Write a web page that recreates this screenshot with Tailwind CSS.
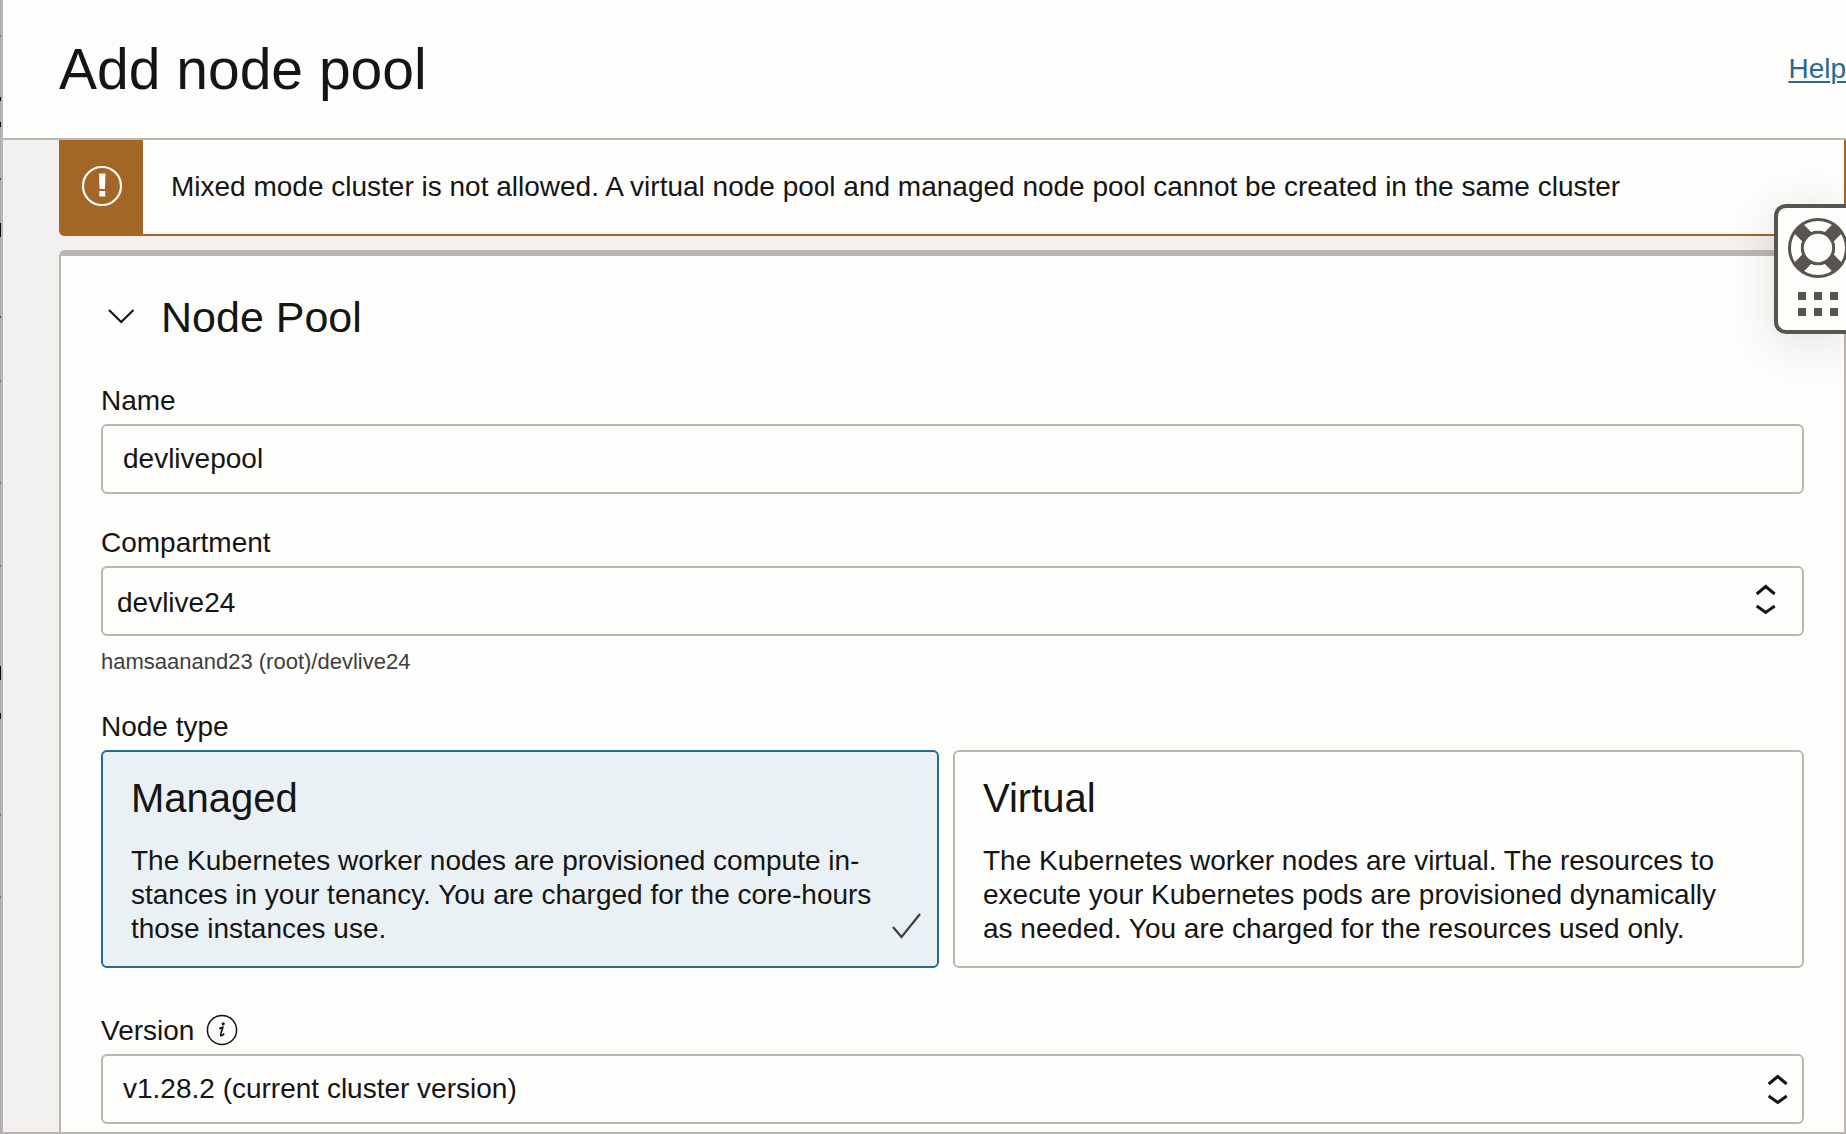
<!DOCTYPE html>
<html lang="en">
<head>
<meta charset="utf-8">
<title>Add node pool</title>
<script src="https://cdn.jsdelivr.net/npm/@tailwindcss/browser@4"></script>
</head>
<body class="relative flex min-h-screen overflow-x-hidden bg-[#f3f1f0] font-['Liberation_Sans',Arial,sans-serif] text-[28px] leading-[34px] text-[#161513]">
  <!-- Sliver of the page behind the drawer -->
  <svg class="w-px shrink-0 self-stretch bg-[#a7aaae]" aria-hidden="true">
    <path d="M.5 97v4M.5 122v5M.5 223v14M.5 666v14M.5 713v6" stroke="#0b0b0b"/>
    <path d="M.5 178v2M.5 316v2" stroke="#1f526e"/>
    <path d="M.5 35v2M.5 380v2M.5 482v2M.5 565v2M.5 814v2M.5 896v2" stroke="#75777a"/>
  </svg>

  <div class="flex min-w-0 grow flex-col border-b-2 border-l-2 border-[#bbb6b2]">
    <header class="flex h-[140px] items-center justify-between border-b-2 border-[#bbb6b2] bg-[#fdfdfc] pl-14">
      <h1 class="text-[57px] leading-[64px]">Add node pool</h1>
      <a href="#" class="text-[#27698f] underline decoration-2 underline-offset-3">Help</a>
    </header>

    <main class="flex grow flex-col pl-14">
      <div role="alert" class="mb-3.5 flex h-24 items-stretch rounded-b-md border-r-2 border-b-2 border-[#a36626] bg-[#fdfdfc]">
        <div class="-mb-0.5 flex w-[84px] shrink-0 items-center justify-center rounded-bl-md bg-[#a36626] pb-0.5">
          <svg class="size-11" viewBox="0 0 44 44" fill="none" aria-hidden="true">
            <circle cx="23" cy="21" r="19" stroke="#fff" stroke-width="2.200"/>
            <path d="M20 8.500h6.500l-.6 15.500h-5.300zM20.300 26h5.900v5.500h-5.900z" fill="#fff"/>
          </svg>
        </div>
        <p class="self-center px-7">Mixed mode cluster is not allowed. A virtual node pool and managed node pool cannot be created in the same cluster</p>
      </div>

      <section class="grow rounded-t-md border-x-2 border-t-6 border-[#bbb6b2] bg-[#fdfdfc] px-10 pt-9 pb-2">
        <h2 class="mb-11">
          <button type="button" class="flex h-12 items-center gap-6.5 pl-1.5 text-[43px] leading-[48px]" aria-expanded="true">
            <svg class="size-7" viewBox="0 0 28 28" fill="none" aria-hidden="true"><path d="M2 8l12.200 12L26.500 8" stroke="#161513" stroke-width="2.200"/></svg>
            <span class="pt-0.5">Node Pool</span>
          </button>
        </h2>

        <form>
          <div class="mb-8 flex flex-col gap-1.5">
            <label for="name">Name</label>
            <input id="name" type="text" value="devlivepool" class="h-[70px] w-full rounded-md border-2 border-[#bbb6b2] bg-[#fdfdfc] px-5">
          </div>

          <div class="mb-8.5 flex flex-col gap-1.5">
            <label for="compartment">Compartment</label>
            <div class="relative">
              <select id="compartment" class="block h-[70px] w-full appearance-none rounded-md border-2 border-[#bbb6b2] bg-[#fdfdfc] pt-1 pr-20 pl-3.5">
                <option>devlive24</option>
              </select>
              <svg class="pointer-events-none absolute top-4 right-6 h-9 w-7" viewBox="0 0 28 36" fill="none" stroke="#161513" stroke-width="3" aria-hidden="true"><path d="M4.700 12l9-7.500 9 7.500M4.700 24l9 6.500 9-6.500"/></svg>
            </div>
            <p class="mt-1.5 text-[22px] leading-[28px] text-[#3f3e3c]">hamsaanand23 (root)/devlive24</p>
          </div>

          <fieldset class="mb-11.5">
            <legend class="mb-1.5">Node type</legend>
            <div class="grid grid-cols-[838fr_851fr] gap-3.5">
              <label class="relative rounded-md border-2 border-[#27698f] bg-[#e9f1f5] pt-5.5 pr-14 pb-5 pl-7">
                <input type="radio" name="type" value="managed" checked class="sr-only">
                <span class="mb-5.5 block text-[40px] leading-[48px]">Managed</span>
                <span class="block">The Kubernetes worker nodes are provisioned compute in&shy;stances in your tenancy. You are charged for the core-hours those instances use.</span>
                <svg class="absolute right-3.5 bottom-6 size-8" viewBox="0 0 32 32" fill="none" aria-hidden="true"><path d="M2 17l8.500 10L29 4" stroke="#3f3e3c" stroke-width="2.200"/></svg>
              </label>
              <label class="relative rounded-md border-2 border-[#bbb6b2] bg-[#fdfdfc] pt-5.5 pr-14 pb-5 pl-7">
                <input type="radio" name="type" value="virtual" class="sr-only">
                <span class="mb-5.5 block text-[40px] leading-[48px]">Virtual</span>
                <span class="block">The Kubernetes worker nodes are virtual. The resources to execute your Kubernetes pods are provisioned dynamically as needed. You are charged for the resources used only.</span>
              </label>
            </div>
          </fieldset>

          <div class="flex flex-col gap-1.5">
            <div class="flex items-center gap-3">
              <label for="version">Version</label>
              <button type="button" aria-label="About version" class="-mt-0.5">
                <svg class="block size-8" viewBox="0 0 32 32" fill="none" aria-hidden="true">
                  <circle cx="16" cy="16" r="14.600" stroke="#161513" stroke-width="1.500"/>
                  <circle cx="17.200" cy="9.800" r="1.600" fill="#161513"/>
                  <path d="M13.200 14.800c1.500-.9 2.700-1.300 3.600-1.500l-2.100 7c-.3 1.300.2 1.700 1 1.300.9-.4 1.700-1.200 2.500-2.100" stroke="#161513" stroke-width="1.700"/>
                </svg>
              </button>
            </div>
            <div class="relative">
              <select id="version" class="block h-[70px] w-full appearance-none rounded-md border-2 border-[#bbb6b2] bg-[#fdfdfc] pr-20 pl-5">
                <option>v1.28.2 (current cluster version)</option>
              </select>
              <svg class="pointer-events-none absolute top-4.5 right-3 h-9 w-7" viewBox="0 0 28 36" fill="none" stroke="#161513" stroke-width="3" aria-hidden="true"><path d="M4.700 12l9-7.500 9 7.500M4.700 24l9 6.500 9-6.500"/></svg>
            </div>
          </div>
        </form>
      </section>
    </main>
  </div>

  <!-- Floating support widget -->
  <button type="button" aria-label="Support" class="absolute top-[204px] right-0 h-[130px] w-[72px] overflow-visible rounded-l-xl border-y-4 border-l-4 border-[#585450] bg-[#fdfdfc] shadow-[0_8px_48px_rgba(0,0,0,0.12)]">
    <svg class="block h-[122px] w-[68px]" viewBox="0 0 68 122" fill="none" aria-hidden="true">
      <circle cx="40" cy="40" r="30" fill="#585450"/>
      <circle cx="40" cy="40" r="22" stroke="#fdfdfc" stroke-width="10"/>
      <path d="M20.500 20.500l39 39M59.500 20.500l-39 39" stroke="#585450" stroke-width="13"/>
      <circle cx="40" cy="40" r="15.700" fill="#fdfdfc" stroke="#585450" stroke-width="3"/>
      <path d="M20 84h8v8h-8zM36 84h8v8h-8zM52 84h8v8h-8zM20 100h8v8h-8zM36 100h8v8h-8zM52 100h8v8h-8z" fill="#585450"/>
    </svg>
  </button>
</body>
</html>
